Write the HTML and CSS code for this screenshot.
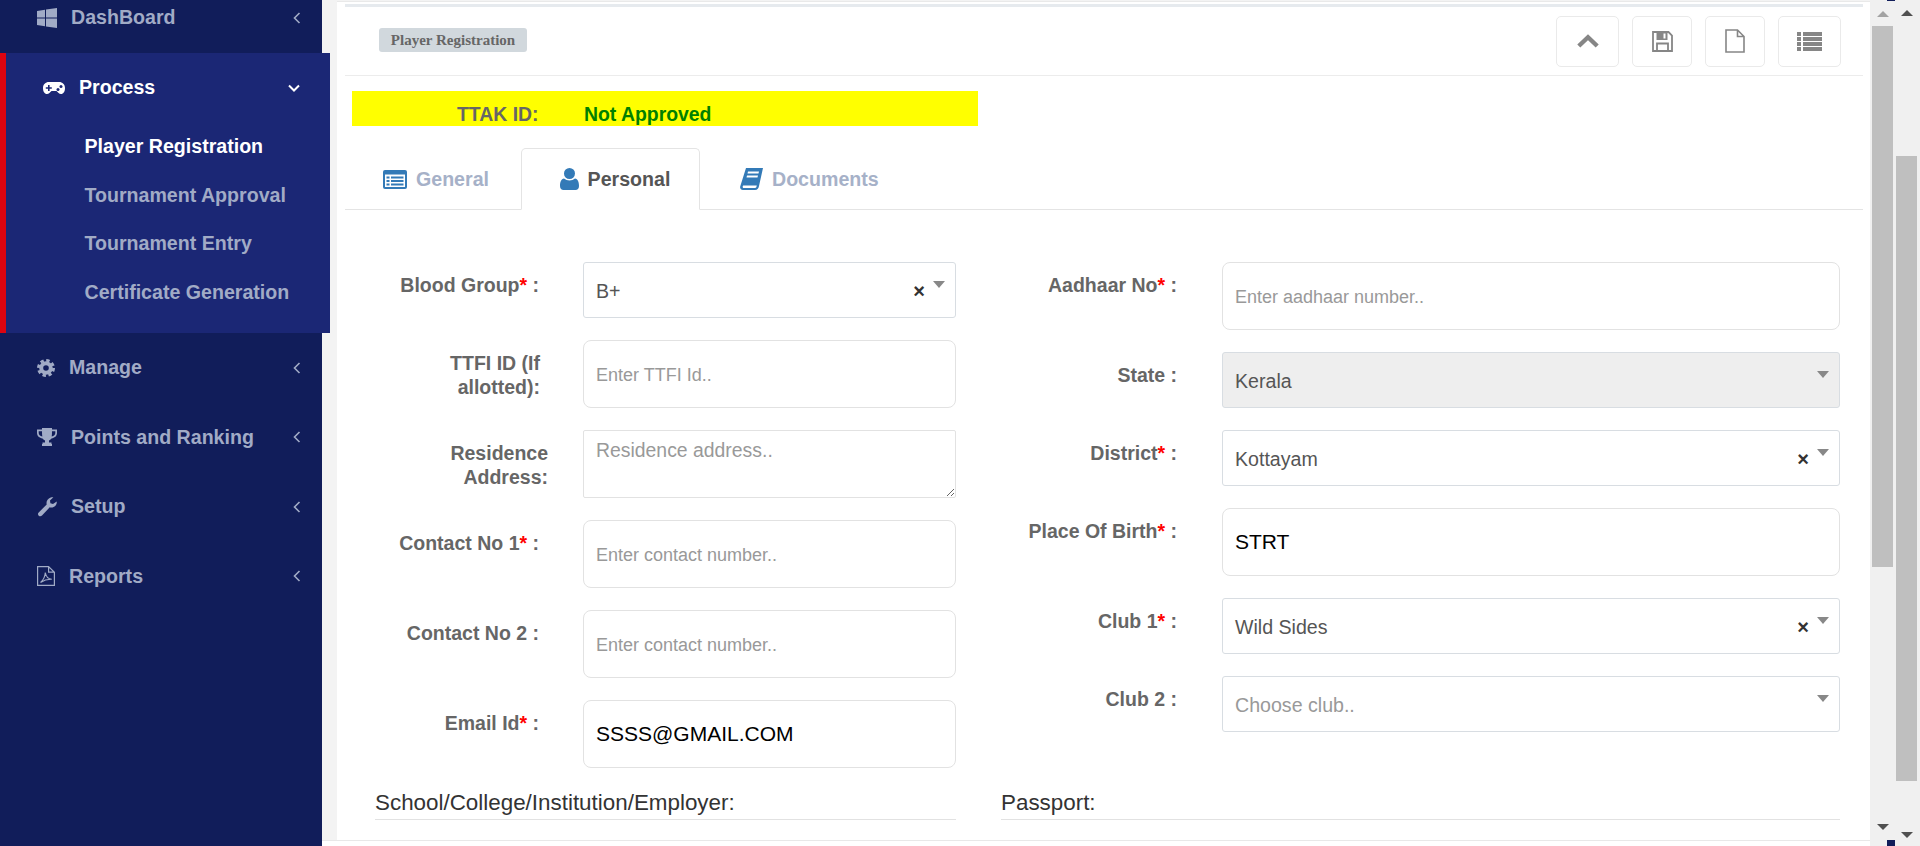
FILE: index.html
```html
<!DOCTYPE html>
<html lang="en">
<head>
  <meta charset="UTF-8">
  <title>Player Registration</title>
  <link rel="stylesheet" href="styles.css">
</head>
<body>
  <aside class="sidebar">
    <ul class="nav">
      <li class="nav-item nav-first">
        <svg class="nav-icon" width="20" height="20" viewBox="0 0 20 20"><path d="M0 3l8-1.200v7.700H0zM9 1.600L20 0v9.500H9zM0 10.500h8v7.700l-8-1.200zM9 10.500h11V20L9 18.400z"/></svg>
        <span class="nav-text">DashBoard</span>
        <svg class="nav-arrow" width="8" height="12" viewBox="0 0 8 12"><path d="M6.500 1L1.500 6l5 5"/></svg>
      </li>
      <li class="nav-open">
        <div class="nav-item nav-item-open">
          <svg class="nav-icon-pad" width="22" height="12" viewBox="0 0 22 12"><path fill="#fff" d="M6 0h10c3.500 0 6 2.500 6 6s-1.500 6-4 6c-2 0-3-1.500-4.500-3h-5C7 10.500 6 12 4 12c-2.500 0-4-2.500-4-6s2.500-6 6-6z"/><path fill="#1b2775" d="M5 3h1.600v2.200h2.200v1.600H6.600V9H5V6.800H2.800V5.200H5z"/><circle fill="#1b2775" cx="15" cy="7.500" r="1.500"/><circle fill="#1b2775" cx="18" cy="4.500" r="1.500"/></svg>
          <span class="nav-text">Process</span>
          <svg class="nav-arrow-down" width="12" height="8" viewBox="0 0 12 8"><path d="M1 1.500l5 5 5-5"/></svg>
        </div>
        <ul class="subnav">
          <li class="subnav-item subnav-active">Player Registration</li>
          <li class="subnav-item">Tournament Approval</li>
          <li class="subnav-item">Tournament Entry</li>
          <li class="subnav-item">Certificate Generation</li>
        </ul>
      </li>
      <li class="nav-item">
        <svg class="nav-icon" width="18" height="18" viewBox="0 0 18 18"><circle cx="9" cy="9" r="4.800" fill="none" stroke="#a1abc6" stroke-width="4"/><circle cx="9" cy="9" r="7.600" fill="none" stroke="#a1abc6" stroke-width="2.800" stroke-dasharray="3.400 2.570"/></svg>
        <span class="nav-text">Manage</span>
        <svg class="nav-arrow" width="8" height="12" viewBox="0 0 8 12"><path d="M6.500 1L1.500 6l5 5"/></svg>
      </li>
      <li class="nav-item">
        <svg class="nav-icon" width="20" height="18" viewBox="0 0 20 18"><path d="M5 0h10v1.500h5V5c0 3-2.500 5-5.500 5.500-.8 1-1.700 1.500-2.500 2v2h2.500V16H5.500v-1.500H8v-2c-.8-.5-1.700-1-2.500-2C2.500 10 0 8 0 5V1.500h5zM1.700 3.200V5c0 1.700 1.400 3 3.600 3.600C5 7 5 5 5 3.200zM15 3.200c0 1.800 0 3.800-.3 5.400C16.900 8 18.300 6.700 18.300 5V3.200z"/><path d="M5 16h10v2H5z"/></svg>
        <span class="nav-text">Points and Ranking</span>
        <svg class="nav-arrow" width="8" height="12" viewBox="0 0 8 12"><path d="M6.500 1L1.500 6l5 5"/></svg>
      </li>
      <li class="nav-item">
        <svg class="nav-icon" width="20" height="20" viewBox="0 0 20 20"><path d="M19.700 4.500c.5 3.200-2.200 6.500-6 6-.4 0-.7-.1-1-.2L5 18.600c-1 1-2.300 1-3.300.1-1-.9-1-2.300 0-3.300l8-7.900c-.8-2.800.8-6 4-7 1-.3 1.900-.3 2.700-.2L13 3.600l.4 2.600 2.600.7z"/></svg>
        <span class="nav-text">Setup</span>
        <svg class="nav-arrow" width="8" height="12" viewBox="0 0 8 12"><path d="M6.500 1L1.500 6l5 5"/></svg>
      </li>
      <li class="nav-item">
        <svg class="nav-icon" width="18" height="20" viewBox="0 0 18 20"><path fill="none" stroke="#a1abc6" stroke-width="1.200" d="M.6.600h11l5.800 5.600v13.200H.6zM11.600.600v5.600h5.800"/><path fill="none" stroke="#a1abc6" stroke-width="1.100" d="M3.500 16.500c2.500-2 4.500-6 4.800-10 .6 4 3 6.500 6.500 6.800-3.500-.2-8 1-11.300 3.200z"/></svg>
        <span class="nav-text">Reports</span>
        <svg class="nav-arrow" width="8" height="12" viewBox="0 0 8 12"><path d="M6.500 1L1.500 6l5 5"/></svg>
      </li>
    </ul>
  </aside>

  <div class="main">
    <div class="card">
      <div class="strip"></div>
      <div class="toolbar">
        <span class="badge">Player Registration</span>
        <div class="tool-btns">
          <button type="button" class="tool-btn tool-wide"><svg width="22" height="14" viewBox="0 0 22 14"><path fill="none" stroke="#868686" stroke-width="4.400" d="M1.800 12L11 3.200 20.200 12"/></svg></button>
          <button type="button" class="tool-btn tool-mid"><svg width="21" height="21" viewBox="0 0 21 21"><path fill="none" stroke="#868686" stroke-width="1.800" d="M1 1h15.500L20 4.500V20H1z"/><path fill="#868686" d="M4.500 1h11v8h-11z"/><path fill="#fff" d="M11.500 2.500h2v5h-2z"/><path fill="none" stroke="#868686" stroke-width="1.800" d="M5 20v-7.500h11V20"/></svg></button>
          <button type="button" class="tool-btn tool-mid"><svg width="20" height="24" viewBox="0 0 20 24"><path fill="none" stroke="#868686" stroke-width="1.600" d="M1 1h11.500L19 7.500V23H1zM12.500 1v6.500H19"/></svg></button>
          <button type="button" class="tool-btn tool-wide"><svg width="25" height="19" viewBox="0 0 25 19"><path fill="#868686" d="M0 0h4v4H0zM6 0h19v4H6zM0 5h4v4H0zM6 5h19v4H6zM0 10h4v4H0zM6 10h19v4H6zM0 15h4v4H0zM6 15h19v4H6z"/></svg></button>
        </div>
      </div>

      <div class="approval">
        <span class="approval-label">TTAK ID:</span>
        <span class="approval-value">Not Approved</span>
      </div>

      <div class="tabs">
        <div class="tab tab-general">
          <svg width="24" height="19" viewBox="0 0 24 19"><path fill="#337ab7" d="M2 0h20a2 2 0 0 1 2 2v15a2 2 0 0 1-2 2H2a2 2 0 0 1-2-2V2a2 2 0 0 1 2-2z"/><path fill="#fff" d="M2 4.500h20v12.500H2z"/><path fill="#337ab7" d="M3.500 6.500h3v2h-3zM8 6.500h12.500v2H8zM3.500 10h3v2h-3zM8 10h12.500v2H8zM3.500 13.500h3v2h-3zM8 13.500h12.500v2H8z"/></svg>
          General
        </div>
        <div class="tab tab-active">
          <svg width="19" height="22" viewBox="0 0 19 22"><circle cx="9.500" cy="5.500" r="5.500" fill="#337ab7"/><path fill="#337ab7" d="M4 10.500c1.500 1.300 3.500 2 5.500 2s4-.7 5.500-2c2.800.5 4 3.500 4 7.500 0 2.500-1.500 4-3.500 4h-12C1.500 22 0 20.500 0 18c0-4 1.200-7 4-7.500z"/></svg>
          Personal
        </div>
        <div class="tab tab-docs">
          <svg width="23" height="22" viewBox="0 0 23 22"><path fill="#337ab7" d="M6 0h17l-4 18c-.3 2-1.500 4-4 4H3C1 22-.3 20.500.2 18.500zM8 3.500l-.5 2h11l.5-2zM7 7.500l-.5 2h11l.5-2zM3.500 17.500c-1 0-1.200 2.500.3 2.500H15c1 0 1.500-.8 1.800-2.500z"/></svg>
          Documents
        </div>
      </div>

      <form class="form" autocomplete="off">
        <div class="form-col form-col-left">
          <div class="row">
            <label class="lbl">Blood Group<span class="req">*</span> :</label>
            <div class="sel"><span class="sel-value">B+</span><span class="sel-clear">×</span><span class="sel-arrow"></span></div>
          </div>
          <div class="row">
            <label class="lbl lbl-wrap">TTFI ID (If allotted):</label>
            <input class="inp" type="text" placeholder="Enter TTFI Id..">
          </div>
          <div class="row">
            <label class="lbl lbl-flush">Residence Address:</label>
            <textarea class="inp txt" placeholder="Residence address.."></textarea>
          </div>
          <div class="row">
            <label class="lbl">Contact No 1<span class="req">*</span> :</label>
            <input class="inp" type="text" placeholder="Enter contact number..">
          </div>
          <div class="row">
            <label class="lbl">Contact No 2 :</label>
            <input class="inp" type="text" placeholder="Enter contact number..">
          </div>
          <div class="row">
            <label class="lbl">Email Id<span class="req">*</span> :</label>
            <input class="inp inp-big" type="text" value="SSSS@GMAIL.COM">
          </div>
        </div>

        <div class="form-col form-col-right">
          <div class="row">
            <label class="lbl">Aadhaar No<span class="req">*</span> :</label>
            <input class="inp" type="text" placeholder="Enter aadhaar number..">
          </div>
          <div class="row">
            <label class="lbl">State :</label>
            <div class="sel sel-disabled"><span class="sel-value">Kerala</span><span class="sel-arrow"></span></div>
          </div>
          <div class="row">
            <label class="lbl">District<span class="req">*</span> :</label>
            <div class="sel"><span class="sel-value">Kottayam</span><span class="sel-clear">×</span><span class="sel-arrow"></span></div>
          </div>
          <div class="row">
            <label class="lbl">Place Of Birth<span class="req">*</span> :</label>
            <input class="inp inp-big" type="text" value="STRT">
          </div>
          <div class="row">
            <label class="lbl">Club 1<span class="req">*</span> :</label>
            <div class="sel"><span class="sel-value">Wild Sides</span><span class="sel-clear">×</span><span class="sel-arrow"></span></div>
          </div>
          <div class="row">
            <label class="lbl">Club 2 :</label>
            <div class="sel"><span class="sel-value sel-empty">Choose club..</span><span class="sel-arrow"></span></div>
          </div>
        </div>

        <div class="section section-left">School/College/Institution/Employer:</div>
        <div class="section section-right">Passport:</div>
      </form>
    </div>
  </div>

  <div class="rail">
    <div class="sb sb-left">
      <span class="sb-up sb-up-off"></span>
      <span class="sb-thumb sb-thumb-left"></span>
      <span class="sb-down"></span>
    </div>
    <div class="sb sb-right">
      <span class="sb-up"></span>
      <span class="sb-thumb sb-thumb-right"></span>
      <span class="sb-down"></span>
    </div>
    <span class="tick tick-top"></span>
    <span class="tick tick-bottom"></span>
  </div>
</body>
</html>
```

FILE: styles.css
```css
* {
  box-sizing: border-box;
}
html, body {
  height: 100%;
}
body {
  margin: 0;
  background: #fff;
  color: #666;
  font-family: 'Liberation Sans', Arial, sans-serif;
  display: flex;
  overflow: hidden;
}
ul {
  list-style: none;
  margin: 0;
  padding: 0;
}

/* sidebar */
.sidebar {
  flex: 0 0 322px;
  background: #111d5a;
}
.nav-item {
  display: flex;
  align-items: center;
  height: 69.5px;
  padding: 0 21px 0 37px;
  color: #a1abc6;
  font-size: 19.6px;
  font-weight: bold;
}
.nav-first {
  margin-top: -18px;
  height: 71px;
}
.nav-icon {
  flex: none;
  fill: #a1abc6;
}
.nav-text {
  flex: 1;
  margin-left: 14px;
}
.nav-arrow, .nav-arrow-down {
  flex: none;
  fill: none;
  stroke: #a1abc6;
  stroke-width: 1.6;
}
.nav-open {
  position: relative;
  height: 280px;
  margin-right: -8px;
  background: #1b2775;
  border-left: 6px solid #dc0410;
}
.nav-item-open {
  height: 69px;
  padding: 0 30px 0 37px;
  color: #fff;
}
.nav-item-open .nav-text {
  margin-left: 14px;
}
.nav-arrow-down {
  stroke: #fff;
  stroke-width: 2;
}
.subnav {
  padding-left: 78.5px;
}
.subnav-item {
  height: 48.7px;
  line-height: 48px;
  color: #a1abc6;
  font-size: 19.6px;
  font-weight: bold;
  white-space: nowrap;
}
.subnav-active {
  color: #fff;
}

/* main card */
.main {
  flex: 1;
  height: 841px;
  padding: 1px 0 0 15px;
  background: #f3f3f3;
  border-bottom: 1px solid #e8e8e8;
}
.card {
  height: 100%;
  padding: 2px 7px 0 8px;
  background: #fff;
  border-top: 1px solid #e9e9e9;
}
.strip {
  height: 3px;
  background: #e6eaee;
}
.toolbar {
  display: flex;
  justify-content: space-between;
  align-items: center;
  height: 69px;
  padding: 0 22px 0 34px;
  border-bottom: 1px solid #ececec;
}
.badge {
  display: block;
  width: 148px;
  height: 24px;
  margin-top: -2px;
  background: #d1d8dd;
  border-radius: 3px;
  color: #666;
  font-family: 'Liberation Serif', serif;
  font-size: 15px;
  font-weight: bold;
  line-height: 24px;
  text-align: center;
}
.tool-btns {
  display: flex;
  gap: 13px;
}
.tool-btn {
  display: flex;
  align-items: center;
  justify-content: center;
  height: 51px;
  padding: 0;
  background: #fff;
  border: 1px solid #eaeaea;
  border-radius: 5px;
}
.tool-wide {
  width: 63px;
}
.tool-mid {
  width: 60px;
}

.approval {
  display: flex;
  height: 35px;
  margin: 15px 0 0 7px;
  width: 626px;
  padding: 9px 0 0 105px;
  background: #ff0;
  font-size: 19.4px;
  font-weight: bold;
  line-height: 28px;
}
.approval-label {
  width: 127px;
  color: #666;
}
.approval-value {
  color: #008000;
}

/* tabs */
.tabs {
  display: flex;
  height: 62px;
  margin-top: 22px;
  border-bottom: 1px solid #e4e4e4;
  font-size: 19.6px;
  font-weight: bold;
  color: #a6b1c8;
}
.tab {
  display: flex;
  align-items: center;
  gap: 9px;
  height: 62px;
}
.tab-general {
  width: 176px;
  padding-left: 38px;
}
.tab-active {
  width: 179px;
  padding-left: 9px;
  justify-content: center;
  background: #fff;
  color: #555;
  border: 1px solid #e4e4e4;
  border-bottom-color: #fff;
  border-radius: 5px 5px 0 0;
}
.tab-docs {
  padding-left: 40px;
}

/* form */
.form {
  display: grid;
  grid-template-columns: 611px 884px;
  margin-top: 52px;
}
.form-col {
  display: flex;
  flex-direction: column;
  gap: 22px;
}
.row {
  display: grid;
  align-items: start;
}
.form-col-left .row {
  grid-template-columns: 203px 373px;
  column-gap: 35px;
}
.form-col-right .row {
  grid-template-columns: 221px 618px;
  column-gap: 45px;
}
.lbl {
  padding: 11px 9px 0 0;
  color: #666;
  font-size: 19.5px;
  font-weight: bold;
  line-height: 24px;
  text-align: right;
}
.form-col-right .lbl {
  padding-right: 0;
}
.lbl-wrap {
  padding-left: 60px;
  padding-right: 8px;
}
.lbl-flush {
  padding-left: 60px;
  padding-right: 0;
}
.req {
  color: #f00;
}
.inp {
  display: block;
  width: 100%;
  height: 68px;
  padding: 3px 12px 0;
  background: #fff;
  border: 1px solid #e2e2e2;
  border-radius: 8px;
  color: #000;
  font-family: inherit;
  font-size: 18px;
  outline: none;
}
.inp::placeholder {
  color: #999;
  opacity: 1;
}
.inp-big {
  padding-top: 0;
  font-size: 21px;
}
.txt {
  padding-top: 8px;
  border-radius: 2px;
  font-size: 19.4px;
  resize: vertical;
}
.sel {
  display: flex;
  align-items: center;
  height: 56px;
  padding: 2px 10px 0 12px;
  background: #fff;
  border: 1px solid #d8dde2;
  border-radius: 3px;
  color: #555;
  font-size: 19.6px;
}
.sel-disabled {
  background: #eee;
}
.sel-value {
  flex: 1;
}
.sel-empty {
  color: #999;
}
.sel-clear {
  margin-right: 8px;
  color: #333;
  font-size: 20px;
  font-weight: bold;
  line-height: 1;
}
.sel-arrow {
  align-self: flex-start;
  width: 0;
  height: 0;
  margin-top: 16px;
  border-left: 6px solid transparent;
  border-right: 6px solid transparent;
  border-top: 7px solid #888;
}
.section {
  height: 52px;
  padding-top: 21px;
  border-bottom: 1px solid #e2e2e2;
  color: #333;
  font-size: 22.4px;
  line-height: 28px;
}
.section-left {
  width: 581px;
  margin-left: 30px;
}
.section-right {
  width: 839px;
  margin-left: 45px;
}

/* the two window scrollbars */
.rail {
  position: relative;
  flex: 0 0 50px;
  display: flex;
  background: #f0f0f0;
}
.sb {
  display: flex;
  flex-direction: column;
  align-items: center;
  width: 25px;
  height: 100%;
}
.sb-left {
  padding: 11px 1px 16px 1px;
}
.sb-right {
  padding: 10px 2px 8px 0;
}
.sb-up, .sb-down {
  flex: none;
  width: 0;
  height: 0;
  border-left: 6px solid transparent;
  border-right: 6px solid transparent;
}
.sb-up {
  border-bottom: 6px solid #505050;
}
.sb-up-off {
  border-bottom-color: #a3a3a3;
}
.sb-down {
  margin-top: auto;
  border-top: 6px solid #505050;
}
.sb-thumb {
  flex: none;
  width: 21px;
  background: #bfbfbf;
}
.sb-thumb-left {
  height: 541px;
  margin-top: 9px;
}
.sb-thumb-right {
  height: 625px;
  margin-top: 140px;
}
.tick {
  position: absolute;
  left: 17px;
  width: 8px;
  background: #111d5a;
}
.tick-top {
  top: 0;
  height: 1px;
}
.tick-bottom {
  bottom: 0;
  height: 6px;
}
```
